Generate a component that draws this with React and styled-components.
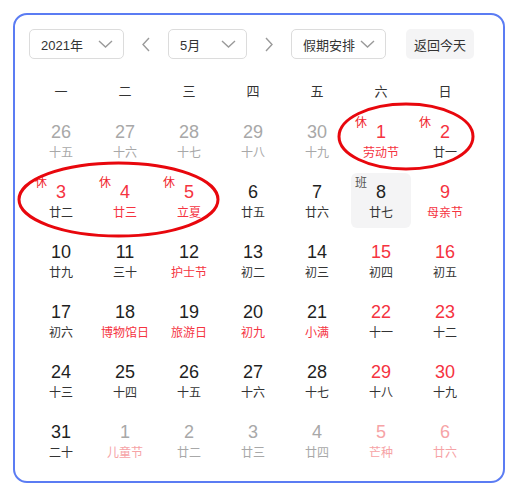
import styled, { createGlobalStyle } from 'styled-components'

const Global = createGlobalStyle`
  body {
    margin: 0;
    background: #fff;
    font-family: "Liberation Sans", "Noto Sans CJK SC", sans-serif;
  }
`

const Page = styled.div`
  position: relative;
  width: 521px;
  height: 498px;
  padding: 13px;
  box-sizing: border-box;
`

const Card = styled.div`
  width: 492px;
  height: 470px;
  box-sizing: border-box;
  border: 2px solid #5b7cf3;
  border-radius: 14px;
  padding: 14px 14px 0 14px;
`

const Toolbar = styled.div`
  display: flex;
  align-items: center;
  height: 30px;
`

const Select = styled.div`
  display: flex;
  align-items: center;
  justify-content: space-between;
  box-sizing: border-box;
  width: ${p => p.$w}px;
  height: 30px;
  padding: 0 10px 0 11px;
  border: 1px solid #dcdcdc;
  border-radius: 5px;
  font-family: "Liberation Sans", "Noto Sans CJK SC", sans-serif;
  font-size: 13px;
  color: #333;
`

const Arrow = styled.div`
  width: 44px;
  display: flex;
  justify-content: center;
  align-items: center;
  padding-left: ${p => p.$shift}px;
  box-sizing: border-box;
`

const TodayButton = styled.div`
  margin-left: 20px;
  height: 30px;
  padding: 0 8px;
  display: flex;
  align-items: center;
  background: #f4f4f5;
  border-radius: 5px;
  font-family: "Noto Sans CJK SC", sans-serif;
  font-size: 13px;
  color: #333;
`

const WeekHeader = styled.div`
  display: grid;
  grid-template-columns: repeat(7, 64px);
  margin-top: 11px;
  height: 40px;
  align-items: center;
`

const WeekDay = styled.div`
  text-align: center;
  font-family: "Noto Sans CJK SC", sans-serif;
  font-size: 13px;
  color: #333;
`

const Grid = styled.div`
  display: grid;
  grid-template-columns: repeat(7, 64px);
  grid-auto-rows: 60px;
`

const Cell = styled.div`
  position: relative;
  margin: 3px 2px 2px 2px;
  border-radius: 6px;
  background: ${p => (p.$active ? '#f4f4f5' : 'transparent')};
  display: flex;
  flex-direction: column;
  align-items: center;
`

const Num = styled.div`
  margin-top: 9px;
  height: 20px;
  line-height: 20px;
  font-family: "Liberation Sans", Arial, sans-serif;
  font-size: 18px;
  color: ${p => p.$color};
`

const Lunar = styled.div`
  margin-top: 1px;
  height: 18px;
  line-height: 18px;
  font-family: "Noto Sans CJK SC", sans-serif;
  font-size: 12px;
  color: ${p => p.$color};
`

const Tag = styled.span`
  position: absolute;
  left: 4px;
  top: 2px;
  font-family: "Noto Sans CJK SC", sans-serif;
  font-size: 12px;
  line-height: 14px;
  color: ${p => (p.$work ? '#555' : '#f01e2c')};
`

const Overlay = styled.svg`
  position: absolute;
  left: 0;
  top: 0;
  pointer-events: none;
`

const BLACK = '#1f1f1f'
const RED = '#f5333f'
const GREY = '#a8a8a8'
const PALE = '#f6a3a6'
const LBLACK = '#333'

// n, lunar, number colour, lunar colour, tag, active
const days = [
  ['26', '十五', GREY, GREY], ['27', '十六', GREY, GREY], ['28', '十七', GREY, GREY],
  ['29', '十八', GREY, GREY], ['30', '十九', GREY, GREY],
  ['1', '劳动节', RED, RED, '休'], ['2', '廿一', RED, LBLACK, '休'],

  ['3', '廿二', RED, LBLACK, '休'], ['4', '廿三', RED, RED, '休'], ['5', '立夏', RED, RED, '休'],
  ['6', '廿五', BLACK, LBLACK], ['7', '廿六', BLACK, LBLACK],
  ['8', '廿七', BLACK, LBLACK, '班', true], ['9', '母亲节', RED, RED],

  ['10', '廿九', BLACK, LBLACK], ['11', '三十', BLACK, LBLACK], ['12', '护士节', BLACK, RED],
  ['13', '初二', BLACK, LBLACK], ['14', '初三', BLACK, LBLACK],
  ['15', '初四', RED, LBLACK], ['16', '初五', RED, LBLACK],

  ['17', '初六', BLACK, LBLACK], ['18', '博物馆日', BLACK, RED], ['19', '旅游日', BLACK, RED],
  ['20', '初九', BLACK, RED], ['21', '小满', BLACK, RED],
  ['22', '十一', RED, LBLACK], ['23', '十二', RED, LBLACK],

  ['24', '十三', BLACK, LBLACK], ['25', '十四', BLACK, LBLACK], ['26', '十五', BLACK, LBLACK],
  ['27', '十六', BLACK, LBLACK], ['28', '十七', BLACK, LBLACK],
  ['29', '十八', RED, LBLACK], ['30', '十九', RED, LBLACK],

  ['31', '二十', BLACK, LBLACK], ['1', '儿童节', GREY, PALE], ['2', '廿二', GREY, GREY],
  ['3', '廿三', GREY, GREY], ['4', '廿四', GREY, GREY],
  ['5', '芒种', PALE, PALE], ['6', '廿六', PALE, PALE],
]

function ChevronDown() {
  return (
    <svg width="15" height="8" viewBox="0 0 15 8">
      <path d="M1 1 L7.5 7 L14 1" fill="none" stroke="#9a9a9a" strokeWidth="1.4" />
    </svg>
  )
}

function ChevronSide({ dir }) {
  const d = dir === 'left' ? 'M8 1 L2 7.5 L8 14' : 'M2 1 L8 7.5 L2 14'
  return (
    <svg width="10" height="15" viewBox="0 0 10 15">
      <path d={d} fill="none" stroke="#9a9a9a" strokeWidth="1.4" />
    </svg>
  )
}

export default function App() {
  return (
    <Page>
      <Global />
      <Card>
        <Toolbar>
          <Select $w={95}>2021年<ChevronDown /></Select>
          <Arrow $shift={-2}><ChevronSide dir="left" /></Arrow>
          <Select $w={79}>5月<ChevronDown /></Select>
          <Arrow $shift={0}><ChevronSide dir="right" /></Arrow>
          <Select $w={95}>假期安排<ChevronDown /></Select>
          <TodayButton>返回今天</TodayButton>
        </Toolbar>
        <WeekHeader>
          {['一', '二', '三', '四', '五', '六', '日'].map(w => <WeekDay key={w}>{w}</WeekDay>)}
        </WeekHeader>
        <Grid>
          {days.map(([n, lunar, nc, lc, tag, active], i) => (
            <Cell key={i} $active={active}>
              {tag && <Tag $work={tag === '班'}>{tag}</Tag>}
              <Num $color={nc}>{n}</Num>
              <Lunar $color={lc}>{lunar}</Lunar>
            </Cell>
          ))}
        </Grid>
      </Card>
      <Overlay width="521" height="498" viewBox="0 0 521 498">
        <ellipse cx="406" cy="136.5" rx="67" ry="32.5" fill="none" stroke="#e8070d" strokeWidth="3" />
        <ellipse cx="118.5" cy="199.5" rx="99.5" ry="36.5" fill="none" stroke="#e8070d" strokeWidth="3" />
      </Overlay>
    </Page>
  )
}
